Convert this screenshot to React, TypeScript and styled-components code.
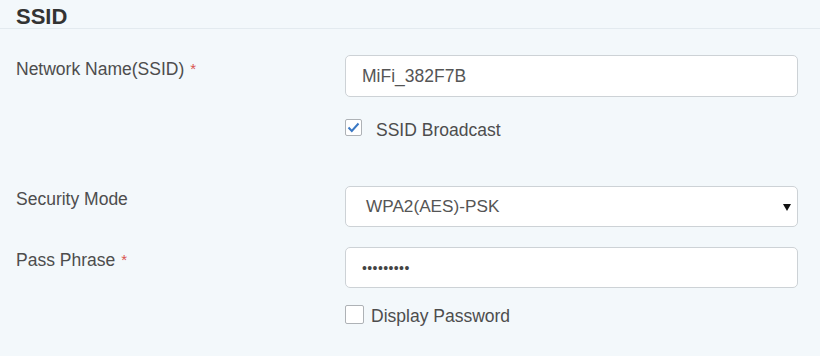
import React from "react";
import styled, { createGlobalStyle } from "styled-components";

const Global = createGlobalStyle`
  html, body { margin: 0; padding: 0; background: #f3f8fb; }
  body { font-family: "Liberation Sans", Arial, sans-serif; width: 820px; height: 356px; overflow: hidden; }
  * { box-sizing: border-box; }
`;

const Page = styled.div`
  width: 820px;
  height: 356px;
  background: #f3f8fb;
  color: #444;
`;

const Header = styled.div`
  height: 29px;
  padding: 5px 0 0 16px;
  border-bottom: 1px solid #e3eaef;
`;

const Title = styled.h2`
  margin: 0;
  font-size: 22px;
  line-height: 23px;
  font-weight: bold;
  color: #333;
`;

const Form = styled.div`
  display: flex;
  flex-direction: column;
  padding-left: 16px;
`;

const Row = styled.div<{ $mt: number }>`
  display: flex;
  margin-top: ${(p) => p.$mt}px;
`;

const Label = styled.div<{ $pt: number }>`
  width: 329px;
  flex: none;
  padding-top: ${(p) => p.$pt}px;
  font-size: 17.5px;
  line-height: 20px;
  color: #4d4d4d;
`;

const Req = styled.span`
  color: #d9534f;
  font-size: 15px;
  margin-left: 6px;
  vertical-align: 1px;
`;

const Field = styled.div`
  width: 453px;
  display: flex;
  flex-direction: column;
`;

const TextInput = styled.input<{ $h: number }>`
  width: 453px;
  height: ${(p) => p.$h}px;
  border: 1px solid #cdd2d6;
  border-radius: 5px;
  background: #fff;
  padding: 0 0 0 16px;
  font-family: "Liberation Sans", Arial, sans-serif;
  font-size: 17.5px;
  color: #555;
  outline: none;
`;

const PassInput = styled(TextInput)`
  font-size: 14px;
  letter-spacing: 0.4px;
  color: #444;
`;

const SelectBox = styled.div`
  position: relative;
  width: 453px;
  height: 41px;
  border: 1px solid #cdd2d6;
  border-radius: 5px;
  background: #fff;
  display: flex;
  align-items: center;
  padding-left: 20px;
  font-size: 17.2px;
  color: #555;
`;

const Arrow = styled.svg`
  position: absolute;
  right: 6px;
  top: 16px;
`;

const CheckRow = styled.label<{ $mt: number; $gap: number }>`
  display: flex;
  align-items: flex-start;
  gap: ${(p) => p.$gap}px;
  margin-top: ${(p) => p.$mt}px;
  font-size: 17.5px;
  line-height: 20px;
  color: #4d4d4d;
`;

const Box = styled.span<{ $size: number; $offset: number }>`
  width: ${(p) => p.$size}px;
  height: ${(p) => p.$size}px;
  margin-top: ${(p) => p.$offset}px;
  border: 1px solid #aeb2b6;
  border-radius: 2px;
  background: #fff;
  display: flex;
  align-items: center;
  justify-content: center;
  flex: none;
`;

export default function App() {
  return (
    <Page>
      <Global />
      <Header>
        <Title>SSID</Title>
      </Header>
      <Form>
        <Row $mt={26}>
          <Label $pt={4}>
            Network Name(SSID)<Req>*</Req>
          </Label>
          <Field>
            <TextInput $h={42} defaultValue="MiFi_382F7B" />
            <CheckRow $mt={23} $gap={14}>
              <Box $size={17} $offset={-1}>
                <svg width="13" height="11" viewBox="0 0 13 11">
                  <polyline points="1.5,5.5 4.8,9 11.5,1.5" fill="none" stroke="#3a78c4" strokeWidth="2" />
                </svg>
              </Box>
              SSID Broadcast
            </CheckRow>
          </Field>
        </Row>
        <Row $mt={46}>
          <Label $pt={3}>Security Mode</Label>
          <Field>
            <SelectBox>
              WPA2(AES)-PSK
              <Arrow width="8" height="8" viewBox="0 0 8 8">
                <polygon points="0,1 8,1 4,8" fill="#111" />
              </Arrow>
            </SelectBox>
          </Field>
        </Row>
        <Row $mt={20}>
          <Label $pt={3}>
            Pass Phrase<Req>*</Req>
          </Label>
          <Field>
            <PassInput $h={41} type="password" defaultValue="123456789" />
            <CheckRow $mt={18} $gap={7}>
              <Box $size={19} $offset={-1} />
              Display Password
            </CheckRow>
          </Field>
        </Row>
      </Form>
    </Page>
  );
}
